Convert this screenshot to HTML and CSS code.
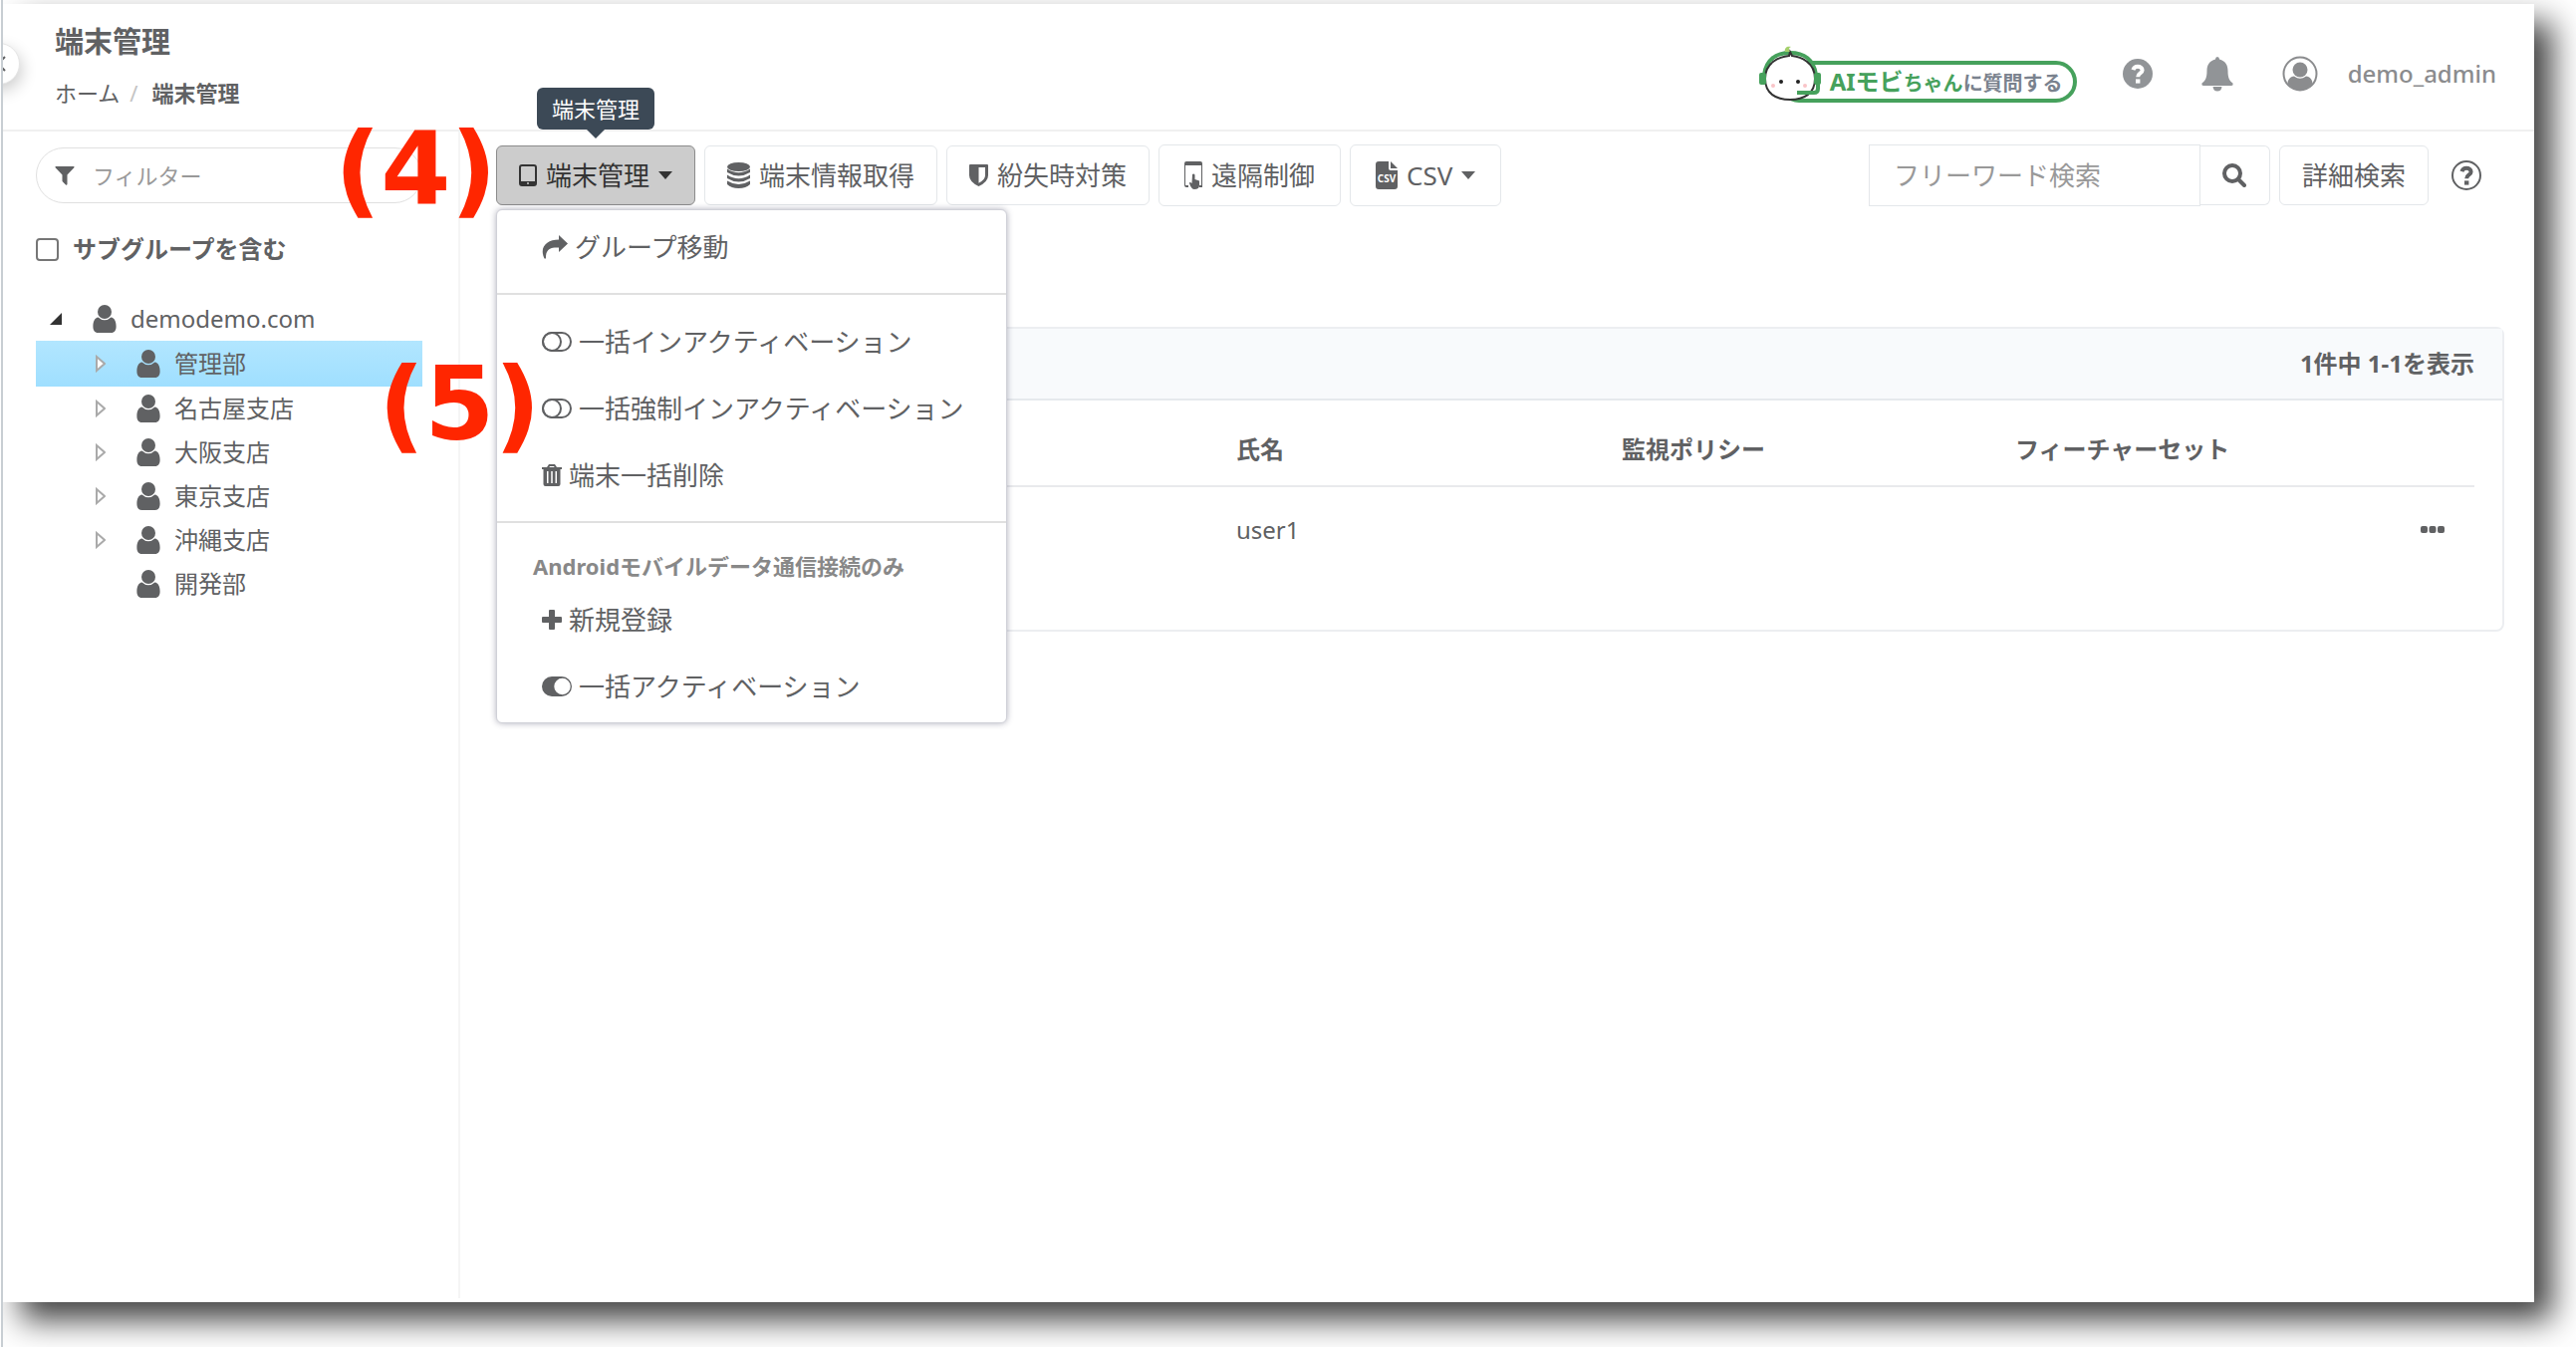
FILE: index.html
```html
<!DOCTYPE html>
<html lang="ja">
<head>
  <meta charset="UTF-8" />
  <title>端末管理</title>
  <meta name="viewport" content="width=device-width, initial-scale=1.0" />
  <link rel="stylesheet" href="styles.css">
</head>
<body>
  <!-- Icon sprite -->
  <svg class="sprite" aria-hidden="true">
    <symbol id="i-user" viewBox="0 0 24 28">
      <ellipse cx="12" cy="7" rx="7" ry="7" />
      <path d="M5.6 12.6C2 13 .4 17 .4 21.500C.4 25.500 2 28 5.500 28H18.500C22 28 23.600 25.500 23.600 21.500C23.600 17 22 13 18.400 12.600A9 9 0 0 1 5.600 12.600Z" />
    </symbol>
    <symbol id="i-filter" viewBox="0 0 20 20">
      <path d="M1 1H19Q20 1.500 19.400 2.300L12.500 9.500V19Q12 20 11 19.400L8 16.600Q7.500 16 7.500 15.500V9.500L.6 2.300Q0 1.500 1 1Z" />
    </symbol>
    <symbol id="i-question" viewBox="0 0 30 30">
      <path d="M10.400 11.200C11.200 8.600 13 7.800 15 7.800C17.600 7.800 19.600 9.200 19.600 11.400C19.600 14.600 15.200 14.400 15.200 18.200" fill="none" stroke="currentColor" stroke-width="4" />
      <rect x="13" y="20.400" width="4.400" height="4.200" />
    </symbol>
    <symbol id="i-toggle-off" viewBox="0 0 30 20">
      <rect x="1" y="1" width="28" height="18" rx="9" fill="none" stroke="currentColor" stroke-width="2" />
      <circle cx="10" cy="10" r="9" fill="none" stroke="currentColor" stroke-width="2" />
    </symbol>
    <symbol id="i-caret" viewBox="0 0 14 8"><path d="M0 0H14L7 8Z" /></symbol>
  </svg>

  <div class="window">
    <div class="frame">
      <button class="collapse" type="button" aria-label="メニューを閉じる">
        <svg viewBox="0 0 12 16" width="12" height="16"><path d="M10 1L3 8L10 15" fill="none" stroke="currentColor" stroke-width="2" /></svg>
      </button>

      <header class="header">
        <div>
          <h1 class="page-title">端末管理</h1>
          <nav class="breadcrumb">
            <a href="#">ホーム</a>
            <span class="slash">/</span>
            <strong>端末管理</strong>
          </nav>
        </div>
        <div class="header-tools">
          <button class="ai-chat" type="button">
            <svg class="ai-face" viewBox="0 0 64 58" width="64" height="58">
              <path d="M6 29C8 14 18 7 32 7S56 14 58 29" fill="none" stroke="#46a15c" stroke-width="4" />
              <path d="M31 10C22 11 7 16 7 33C7 48 18 54 32 54S57 48 57 33C57 16 42 11 34 10L32 6Z" fill="#fff" stroke="#333" stroke-width="2" />
              <path d="M27 6C26 2 29 0 33 1C30 2 31 5 32 6" fill="#a5d06c" />
              <rect x="1" y="27" width="7" height="12" rx="2" fill="#46a15c" />
              <rect x="56" y="27" width="7" height="12" rx="2" fill="#46a15c" />
              <path d="M60 38V43Q60 47 56 47H39" fill="none" stroke="#46a15c" stroke-width="4" />
              <circle cx="23" cy="36" r="2" fill="#222" /><circle cx="40" cy="36" r="2" fill="#222" />
              <circle cx="15" cy="40" r="2" fill="#f9c4c8" /><circle cx="47" cy="40" r="2" fill="#f9c4c8" />
            </svg>
            <span class="ai-label"><span class="ai-name">AIモビ</span><span class="ai-suffix">ちゃん</span>に質問する</span>
          </button>
          <button class="icon-btn help" type="button" aria-label="ヘルプ">
            <svg viewBox="0 0 30 30" width="30" height="30"><circle cx="15" cy="15" r="15" fill="#919497" /><use href="#i-question" /></svg>
          </button>
          <button class="icon-btn" type="button" aria-label="通知">
            <svg viewBox="0 0 32 36" width="32" height="36">
              <path d="M16 1Q18 1 18 3.500C24 5 26.500 9.500 26.500 15C26.500 22 28 25 31.500 27.500Q32 30 30 30H2Q0 30 .5 27.500C4 25 5.500 22 5.500 15C5.500 9.500 8 5 14 3.500Q14 1 16 1Z" />
              <path d="M11.500 31H20.500Q20 35.500 16 35.500T11.500 31Z" />
            </svg>
          </button>
          <button class="account" type="button">
            <svg viewBox="0 0 36 36" width="36" height="36">
              <circle cx="18" cy="18" r="16.500" fill="none" stroke="currentColor" stroke-width="2" />
              <circle cx="18" cy="14" r="7.500" />
              <path d="M12 20.500C8 21 5.500 24 5.500 28Q11 34.500 18 34.500T30.500 28C30.500 24 28 21 24 20.500Q18 25 12 20.500Z" />
            </svg>
            demo_admin
          </button>
        </div>
      </header>

      <div class="content">
        <aside class="sidebar">
          <div class="filter">
            <svg width="20" height="20"><use href="#i-filter" /></svg>
            <input type="text" placeholder="フィルター" aria-label="フィルター" />
          </div>
          <label class="subgroup"><input type="checkbox" /> サブグループを含む</label>
          <ul class="tree">
            <li class="node root">
              <svg class="arrow" width="12" height="12" viewBox="0 0 12 12"><path d="M12 0V12H0Z" fill="#333" /></svg>
              <svg class="person" width="24" height="28"><use href="#i-user" /></svg>demodemo.com
            </li>
            <li class="node selected">
              <svg class="arrow" width="10" height="18" viewBox="0 0 10 18"><path d="M1 2L9 9L1 16Z" /></svg>
              <svg class="person" width="24" height="28"><use href="#i-user" /></svg>管理部
            </li>
            <li class="node">
              <svg class="arrow" width="10" height="18" viewBox="0 0 10 18"><path d="M1 2L9 9L1 16Z" /></svg>
              <svg class="person" width="24" height="28"><use href="#i-user" /></svg>名古屋支店
            </li>
            <li class="node">
              <svg class="arrow" width="10" height="18" viewBox="0 0 10 18"><path d="M1 2L9 9L1 16Z" /></svg>
              <svg class="person" width="24" height="28"><use href="#i-user" /></svg>大阪支店
            </li>
            <li class="node">
              <svg class="arrow" width="10" height="18" viewBox="0 0 10 18"><path d="M1 2L9 9L1 16Z" /></svg>
              <svg class="person" width="24" height="28"><use href="#i-user" /></svg>東京支店
            </li>
            <li class="node">
              <svg class="arrow" width="10" height="18" viewBox="0 0 10 18"><path d="M1 2L9 9L1 16Z" /></svg>
              <svg class="person" width="24" height="28"><use href="#i-user" /></svg>沖縄支店
            </li>
            <li class="node">
              <span class="arrow"></span>
              <svg class="person" width="24" height="28"><use href="#i-user" /></svg>開発部
            </li>
          </ul>
        </aside>

        <main class="main">
          <div class="toolbar">
            <div class="dropdown">
              <button class="btn active" type="button" aria-expanded="true">
                <svg width="18" height="22" viewBox="0 0 18 22"><rect x="1" y="1" width="16" height="20" rx="2" fill="none" stroke="currentColor" stroke-width="2" /><path d="M1 17H17V21H1Z" /><circle cx="9" cy="19" r="1" fill="#ccc" /></svg>
                端末管理
                <svg class="caret" width="14" height="8"><use href="#i-caret" /></svg>
              </button>
              <span class="tooltip" role="tooltip">端末管理</span>
              <div class="menu">
                <button class="item" type="button">
                  <svg width="26" height="24" viewBox="0 0 26 24"><path d="M17 0L26 8.500L17 17V12.500C9 12 3.500 14 4 23.500H2.500C-3 12 5 4.500 17 4.500Z" /></svg>
                  グループ移動
                </button>
                <hr />
                <button class="item" type="button"><svg width="30" height="20"><use href="#i-toggle-off" /></svg>一括インアクティベーション</button>
                <button class="item" type="button"><svg width="30" height="20"><use href="#i-toggle-off" /></svg>一括強制インアクティベーション</button>
                <button class="item" type="button">
                  <svg width="20" height="22" viewBox="0 0 20 22"><path d="M0 3H5L7 0H13L15 3H20V5H18.500V20Q18.500 22 16.500 22H3.500Q1.500 22 1.500 20V5H0ZM7.300 3H12.700L12 2H8ZM5 7V19H6.500V7ZM9.250 7V19H10.750V7ZM13.500 7V19H15V7Z" fill-rule="evenodd" /></svg>
                  端末一括削除
                </button>
                <hr />
                <p class="menu-head">Androidモバイルデータ通信接続のみ</p>
                <button class="item" type="button">
                  <svg width="20" height="20" viewBox="0 0 20 20"><path d="M8 0H12Q13 0 13 1V7H19Q20 7 20 8V12Q20 13 19 13H13V19Q13 20 12 20H8Q7 20 7 19V13H1Q0 13 0 12V8Q0 7 1 7H7V1Q7 0 8 0Z" /></svg>
                  新規登録
                </button>
                <button class="item" type="button">
                  <svg width="30" height="20" viewBox="0 0 30 20"><path d="M10 0H20A10 10 0 0 1 20 20H10A10 10 0 0 1 10 0ZM20.500 1.800A8.200 8.200 0 1 0 20.500 18.200A8.200 8.200 0 1 0 20.500 1.800Z" fill-rule="evenodd" /></svg>
                  一括アクティベーション
                </button>
              </div>
            </div>
            <button class="btn" type="button">
              <svg width="23" height="26" viewBox="0 0 23 26"><ellipse cx="11.500" cy="4.500" rx="11.500" ry="4.500" /><path d="M0 6.500Q11.500 14 23 6.500V10Q11.500 17 0 10ZM0 12.500Q11.500 20 23 12.500V16Q11.500 23 0 16ZM0 18.500Q11.500 25.500 23 18.500V22Q19 26 11.500 26T0 22Z" /></svg>
              端末情報取得
            </button>
            <button class="btn" type="button">
              <svg width="19" height="22" viewBox="0 0 19 22"><path d="M0 1Q0 0 1 0H18Q19 0 19 1V11Q19 17.500 9.500 22Q0 17.500 0 11ZM9.500 3V18.800Q16 15.500 16 11V3Z" fill-rule="evenodd" /></svg>
              紛失時対策
            </button>
            <button class="btn tall" type="button">
              <svg width="18" height="28" viewBox="0 0 18 28"><path d="M0 2Q0 0 2 0H16Q18 0 18 2V26H15V24H17V4H1V24H4V26H2Q0 26 0 24Z" fill-rule="evenodd" /><path d="M8 13Q9.500 12 10.500 13.500V18L15 19.500V24Q15 28 10 28Q7 28 5 22Q5 20 7.500 22Z" /></svg>
              遠隔制御
            </button>
            <button class="btn tall" type="button">
              <svg width="22" height="28" viewBox="0 0 22 28"><path d="M3 0H13V7Q13 9 15 9H22V25Q22 28 19 28H3Q0 28 0 25V3Q0 0 3 0Z" /><path d="M15 0L22 7H15Z" /><text class="csv-mark" x="11" y="21" text-anchor="middle">CSV</text></svg>
              CSV
              <svg class="caret" width="14" height="8"><use href="#i-caret" /></svg>
            </button>

            <form class="search">
              <input type="search" placeholder="フリーワード検索" aria-label="フリーワード検索" />
              <button class="btn search-btn" type="button" aria-label="検索">
                <svg width="24" height="24" viewBox="0 0 24 24"><g fill="none" stroke="currentColor" stroke-width="4"><circle cx="10" cy="10" r="8" /><path d="M16 16L22 22" stroke-linecap="round" /></g></svg>
              </button>
            </form>
            <button class="btn" type="button">詳細検索</button>
            <button class="icon-btn search-help" type="button" aria-label="検索のヘルプ">
              <svg viewBox="0 0 30 30" width="30" height="30"><circle cx="15" cy="15" r="14" fill="none" stroke="currentColor" stroke-width="2" /><use href="#i-question" /></svg>
            </button>
          </div>

          <section class="card">
            <div class="card-head">1件中 1-1を表示</div>
            <div class="card-body">
              <table class="devices">
                <thead>
                  <tr><th class="col-device"></th><th class="col-name">氏名</th><th class="col-policy">監視ポリシー</th><th>フィーチャーセット</th><th class="col-more"></th></tr>
                </thead>
                <tbody>
                  <tr>
                    <td></td><td>user1</td><td></td><td></td>
                    <td>
                      <button class="icon-btn" type="button" aria-label="操作">
                        <svg width="24" height="8" viewBox="0 0 24 8"><rect width="7" height="7" rx="2" /><rect x="8.500" width="7" height="7" rx="2" /><rect x="17" width="7" height="7" rx="2" /></svg>
                      </button>
                    </td>
                  </tr>
                </tbody>
              </table>
            </div>
          </section>
        </main>
      </div>

      <!-- Step numbers over the screen -->
      <span class="step step-4">(4)</span>
      <span class="step step-5">(5)</span>
    </div>
  </div>
</body>
</html>
```

FILE: styles.css
```css
* {
  box-sizing: border-box;
  margin: 0;
  padding: 0;
}

body {
  background-color: #fff;
  color: #606163;
  font-family: "Noto Sans", "Noto Sans CJK JP", sans-serif;
  font-size: 24px;
  line-height: 36px;
  padding-left: 1px;
  overflow: hidden;
}

button,
input {
  font: inherit;
  color: inherit;
}

button {
  background: none;
  border: none;
  cursor: pointer;
}

svg {
  display: block;
  flex: none;
  fill: currentColor;
}

.sprite {
  position: absolute;
  width: 0;
  height: 0;
}

.window {
  min-height: 100vh;
  padding: 4px 42px 45px 0;
  border-left: 2px solid #c8ced3;
  overflow: hidden;
}

.frame {
  position: relative;
  min-height: calc(100vh - 49px);
  background-color: #fff;
  box-shadow: 18px 18px 30px rgba(0, 0, 0, 0.74);
}

.collapse {
  position: absolute;
  left: -25px;
  top: 39px;
  width: 42px;
  height: 42px;
  padding-left: 16px;
  border: 1px solid #e6e6e6;
  border-radius: 50%;
  background-color: #fff;
  box-shadow: 2px 6px 16px rgba(0, 0, 0, 0.2);
}

/* Header */
.header {
  display: flex;
  justify-content: space-between;
  padding: 20px 38px 22px 52px;
  border-bottom: 2px solid #f0f0f0;
}

.page-title {
  font-size: 29px;
  line-height: 36px;
  margin-bottom: 18px;
}

.breadcrumb {
  display: flex;
  font-size: 22px;
  line-height: 30px;
}

.breadcrumb a {
  color: inherit;
  text-decoration: none;
}

.slash {
  color: #c4c4c4;
  margin: 0 14px 0 10px;
}

.header-tools {
  display: flex;
  align-items: center;
  height: 84px;
  padding-top: 16px;
}

.ai-chat {
  position: relative;
  height: 42px;
  width: 300px;
  padding-left: 48px;
  margin-right: 46px;
  border: 4px solid #46a15c;
  border-radius: 21px;
  background-color: #fff;
  font-size: 20px;
  line-height: 34px;
  text-align: left;
  color: #7a828e;
  font-weight: bold;
  margin-top: 16px;
}

.ai-face {
  position: absolute;
  left: -24px;
  top: -19px;
}

.ai-label {
  display: block;
  white-space: nowrap;
}

.ai-name,
.ai-suffix {
  color: #46a15c;
}

.ai-name {
  font-size: 24px;
}

.icon-btn {
  display: flex;
}

.header .icon-btn {
  color: #919497;
  margin-right: 49px;
}

.header .help {
  color: #fff;
}

.account {
  display: flex;
  align-items: center;
  gap: 30px;
  color: #8b8c8e;
  font-weight: 500;
}

/* Sidebar */
.content {
  display: flex;
}

.sidebar {
  flex: none;
  width: 459px;
  padding: 16px 36px 0 33px;
  border-right: 2px solid #f5f5f5;
  min-height: calc(100vh - 181px);
}

.filter {
  display: flex;
  align-items: center;
  height: 56px;
  padding: 0 18px;
  gap: 18px;
  border: 1px solid #e0e0e0;
  border-radius: 28px;
}

.filter input {
  flex: 1;
  min-width: 0;
  border: none;
  outline: none;
  background: none;
  font-size: 22px;
}

input::placeholder {
  color: #999;
}

.subgroup {
  display: flex;
  align-items: center;
  gap: 14px;
  margin: 28px 0 30px;
  font-weight: bold;
}

.subgroup input {
  appearance: none;
  width: 23px;
  height: 23px;
  border: 2px solid #767676;
  border-radius: 4px;
}

.tree {
  list-style: none;
}

.node {
  display: flex;
  align-items: center;
  height: 44px;
  padding-left: 60px;
}

.node.root {
  padding-left: 14px;
}

.node.selected {
  height: 46px;
  background: linear-gradient(#b2e6ff, #9fdfff);
}

.arrow {
  width: 10px;
  margin-right: 31px;
  fill: #fff;
  stroke: #aaa;
  stroke-width: 2px;
}

.root .arrow {
  width: 12px;
  stroke: none;
}

.person {
  margin-right: 14px;
}

/* Toolbar */
.main {
  flex: 1;
  min-width: 0;
  padding: 13px 30px 0 36px;
}

.toolbar {
  display: flex;
  align-items: center;
  gap: 9px;
  margin-bottom: 121px;
}

.btn {
  display: flex;
  align-items: center;
  justify-content: center;
  gap: 9px;
  height: 60px;
  padding: 0 22px;
  border: 1px solid #e4e7ea;
  border-radius: 6px;
  background-color: #fff;
  font-size: 26px;
  white-space: nowrap;
}

.btn.tall {
  height: 62px;
  padding: 0 25px;
}

.btn.active {
  background-color: #ccc;
  border-color: #8c8c8c;
  color: #333;
}

.csv-mark {
  fill: #fff;
  font-size: 10px;
  font-weight: bold;
}

.dropdown {
  position: relative;
}

.tooltip {
  position: absolute;
  left: 50%;
  bottom: 76px;
  transform: translateX(-50%);
  padding: 3px 15px;
  border-radius: 6px;
  background-color: #3c4956;
  color: #fff;
  font-size: 22px;
  white-space: nowrap;
}

.tooltip::after {
  content: "";
  position: absolute;
  left: 50%;
  top: 100%;
  margin-left: -9px;
  border: 9px solid transparent;
  border-top-color: #3c4956;
  border-bottom: none;
}

.menu {
  position: absolute;
  z-index: 1;
  left: 0;
  top: 64px;
  width: 513px;
  padding: 3px 0;
  border: 1px solid #d0d1d8;
  border-radius: 6px;
  background-color: #fff;
  box-shadow: 0 0 6px rgba(60, 60, 90, 0.4);
}

.item {
  display: flex;
  align-items: center;
  gap: 7px;
  width: 100%;
  height: 67px;
  padding: 0 0 0 45px;
  font-size: 26px;
  white-space: nowrap;
}

.menu hr {
  border: none;
  border-top: 2px solid #e0e0e0;
  margin: 13px 0;
}

.menu-head {
  padding: 12px 36px 2px;
  font-size: 22px;
  font-weight: bold;
  color: #888;
}

.search {
  display: flex;
  align-items: center;
  margin-left: auto;
}

.search input {
  width: 333px;
  height: 62px;
  padding: 0 24px;
  border: 1px solid #e4e7ea;
  outline: none;
  font-size: 26px;
}

.search-btn {
  width: 70px;
  border-left: none;
  border-radius: 0 6px 6px 0;
}

.search-help {
  margin: 0 23px 0 14px;
}

/* Device list */
.card {
  border: 2px solid #eceef1;
  border-radius: 8px;
}

.card-head {
  padding: 17px 28px;
  border-bottom: 2px solid #e6e9ed;
  background-color: #f8fafc;
  font-weight: bold;
  text-align: right;
}

.card-body {
  padding: 20px 28px 56px;
}

.devices {
  width: 100%;
  table-layout: fixed;
  border-collapse: collapse;
  text-align: left;
}

.devices th {
  height: 66px;
  padding-bottom: 8px;
  border-bottom: 2px solid #e9eaec;
}

.devices td {
  height: 88px;
  padding-bottom: 2px;
}

.col-device {
  width: 713px;
}

.col-name {
  width: 387px;
}

.col-policy {
  width: 395px;
}

.col-more {
  width: 54px;
}

/* Step numbers */
.step {
  position: absolute;
  z-index: 2;
  color: #ff2600;
  font-family: "DejaVu Sans", sans-serif;
  font-size: 101px;
  font-weight: bold;
  line-height: 101px;
}

.step-4 {
  left: 333px;
  top: 116px;
}

.step-5 {
  left: 377px;
  top: 352px;
}
```
